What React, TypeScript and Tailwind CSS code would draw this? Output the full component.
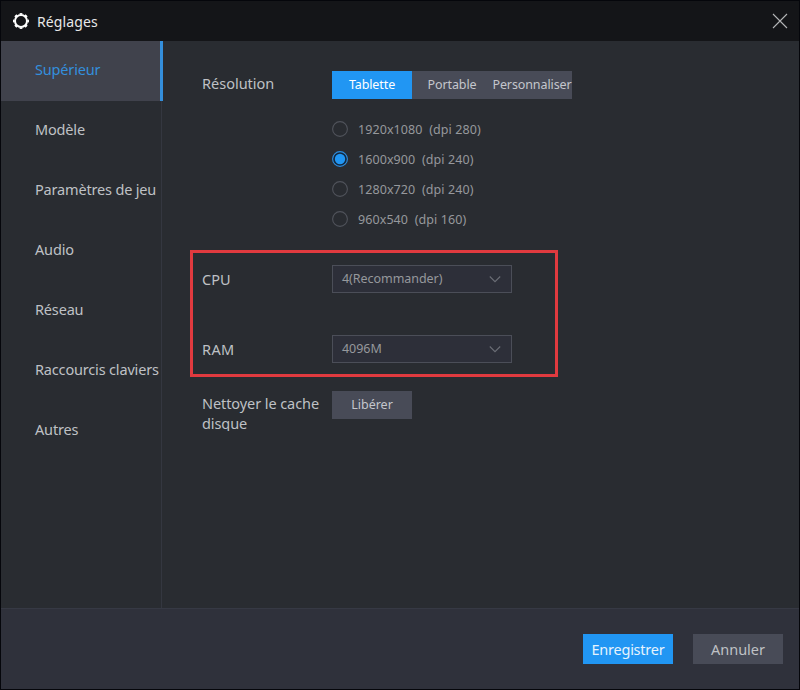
import clsx from "clsx";
import { useState } from "react";

const menu = [
  "Supérieur",
  "Modèle",
  "Paramètres de jeu",
  "Audio",
  "Réseau",
  "Raccourcis claviers",
  "Autres",
];

const tabs = ["Tablette", "Portable", "Personnaliser"];

const resolutions = [
  { size: "1920x1080", dpi: 280 },
  { size: "1600x900", dpi: 240 },
  { size: "1280x720", dpi: 240 },
  { size: "960x540", dpi: 160 },
];

export default function App() {
  const [page, setPage] = useState("Supérieur");
  const [tab, setTab] = useState("Tablette");
  const [resolution, setResolution] = useState("1600x900");

  return (
    <div className="flex h-[690px] w-[800px] flex-col overflow-hidden border border-[#05060b] bg-[#292c31] font-['Noto_Sans',sans-serif] text-[14.5px] text-[#bfc1c5]">
      <header className="flex h-10 shrink-0 items-center bg-[#141518] pr-[11px] pl-3 text-[#e8e8e8]">
        <GearIcon />
        <h1 className="ml-2 text-[14px] tracking-[0.1px]">Réglages</h1>
        <button className="ml-auto">
          <CloseIcon />
        </button>
      </header>

      <div className="flex h-[567px] shrink-0">
        <nav className="w-[161px] shrink-0 border-r border-[#343740]">
          {menu.map((label) => (
            <button
              key={label}
              onClick={() => setPage(label)}
              className={clsx(
                "flex h-[60px] items-center pb-[2px] pl-[34px] text-left tracking-[-0.17px] whitespace-nowrap",
                page === label
                  ? "w-[162px] border-r-[3px] border-[#348fdc] bg-[#40424c] text-[#348fdc]"
                  : "w-[160px]"
              )}
            >
              {label}
            </button>
          ))}
        </nav>

        <main className="flex-1 pt-[30px] pl-7">
          <section className="flex pl-3">
            <Label className="leading-6">Résolution</Label>
            <div>
              <div className="flex w-60 bg-[#484b57] text-[12.5px]">
                {tabs.map((name) => (
                  <button
                    key={name}
                    onClick={() => setTab(name)}
                    className={clsx(
                      "flex h-7 w-20 items-center justify-center tracking-[-0.1px] whitespace-nowrap",
                      tab === name ? "bg-[#2196f3] text-white" : "text-[#c4c6cc]"
                    )}
                  >
                    {name}
                  </button>
                ))}
              </div>
              <div className="mt-[15px]">
                {resolutions.map(({ size, dpi }) => (
                  <button
                    key={size}
                    onClick={() => setResolution(size)}
                    className="flex h-[30px] items-center gap-[10px] text-[12.5px] tracking-[0.08px] whitespace-pre text-[#96989c]"
                  >
                    <Radio checked={resolution === size} />
                    <span className="pt-[2px]">{`${size}  (dpi ${dpi})`}</span>
                  </button>
                ))}
              </div>
            </div>
          </section>

          <section className="mt-4 flex h-[127px] w-[368px] flex-col gap-[42px] border-[3px] border-[#e03a3f] pt-3 pl-[9px]">
            <div className="flex">
              <Label className="leading-7">CPU</Label>
              <Select value="4(Recommander)" />
            </div>
            <div className="flex">
              <Label className="leading-7 tracking-[0.4px]">RAM</Label>
              <Select value="4096M" />
            </div>
          </section>

          <section className="mt-[14px] flex pl-3">
            <Label className="h-10 overflow-hidden pt-[2px] leading-5 tracking-[-0.08px]">
              Nettoyer le cache disque
            </Label>
            <button className="h-7 w-20 bg-[#484b57] text-[12.5px] text-[#c4c6cc]">
              Libérer
            </button>
          </section>
        </main>
      </div>

      <footer className="flex flex-1 justify-end gap-5 border-t border-[#363944] bg-[#2f313b] pt-[25px] pr-4">
        <button className="h-[30px] w-[90px] bg-[#2196f3] pt-[2px] tracking-[-0.25px] text-[#e6f3fd]">
          Enregistrer
        </button>
        <button className="h-[30px] w-[90px] bg-[#484b57] pt-[2px]">
          Annuler
        </button>
      </footer>
    </div>
  );
}

function Label({
  className,
  children,
}: {
  className?: string;
  children: string;
}) {
  return <div className={clsx("w-[130px] shrink-0", className)}>{children}</div>;
}

function Select({ value }: { value: string }) {
  return (
    <button className="flex h-7 w-[180px] items-center justify-between border border-[#4b4e58] bg-[#2d2f39] pr-[10px] pl-[9px] text-[12.5px] tracking-[-0.05px] text-[#96989c]">
      {value}
      <svg width="12" height="8" viewBox="0 0 12 8" fill="none">
        <path d="M0.8 1.5 6 6.7 11.2 1.5" stroke="#6a6d75" strokeWidth="1.1" />
      </svg>
    </button>
  );
}

function Radio({ checked }: { checked: boolean }) {
  return (
    <svg width="16" height="16" viewBox="0 0 16 16" fill="none">
      <circle
        cx="8"
        cy="8"
        r="7.4"
        stroke={checked ? "#2f8ddd" : "#50535b"}
        strokeWidth="1.1"
        fill={checked ? "#12283f" : "none"}
      />
      {checked && <circle cx="8" cy="8" r="5.2" fill="#2196f3" />}
    </svg>
  );
}

function GearIcon() {
  return (
    <svg width="16" height="16" viewBox="0 0 16 16" fill="none" stroke="#fff">
      <circle cx="8" cy="8" r="6" strokeWidth="2" />
      {/* eight teeth around the ring */}
      <circle
        cx="8"
        cy="8"
        r="7.2"
        strokeWidth="1.6"
        pathLength="80"
        strokeDasharray="5 5"
        strokeDashoffset="2.5"
      />
    </svg>
  );
}

function CloseIcon() {
  return (
    <svg width="16" height="16" viewBox="0 0 16 16" fill="none">
      <path d="M1 1 15 15M15 1 1 15" stroke="#b4b5b7" strokeWidth="1.1" />
    </svg>
  );
}
